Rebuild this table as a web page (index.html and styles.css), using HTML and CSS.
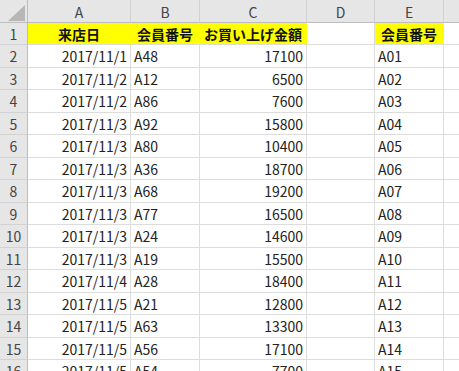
FILE: index.html
```html
<!DOCTYPE html>
<html lang="ja">
<head>
<meta charset="utf-8">
<title>Sheet</title>
<link rel="stylesheet" href="styles.css">
</head>
<body>
<div class="sheet">
  <div class="corner"><svg class="tri" width="28" height="23" viewBox="0 0 28 23"><polygon points="25,5 25,21 8,21" fill="#b7b7b7"/></svg></div>
  <div class="ch">A</div><div class="ch">B</div><div class="ch">C</div><div class="ch">D</div><div class="ch">E</div><div class="ch last"></div>

  <div class="rh">1</div>
  <div class="c hd y">来店日</div><div class="c hd y">会員番号</div><div class="c hd y">お買い上げ金額</div><div class="c"></div><div class="c hd y">会員番号</div><div class="c last"></div>

  <div class="rh">2</div><div class="c r">2017/11/1</div><div class="c">A48</div><div class="c r">17100</div><div class="c"></div><div class="c">A01</div><div class="c last"></div>
  <div class="rh">3</div><div class="c r">2017/11/2</div><div class="c">A12</div><div class="c r">6500</div><div class="c"></div><div class="c">A02</div><div class="c last"></div>
  <div class="rh">4</div><div class="c r">2017/11/2</div><div class="c">A86</div><div class="c r">7600</div><div class="c"></div><div class="c">A03</div><div class="c last"></div>
  <div class="rh">5</div><div class="c r">2017/11/3</div><div class="c">A92</div><div class="c r">15800</div><div class="c"></div><div class="c">A04</div><div class="c last"></div>
  <div class="rh">6</div><div class="c r">2017/11/3</div><div class="c">A80</div><div class="c r">10400</div><div class="c"></div><div class="c">A05</div><div class="c last"></div>
  <div class="rh">7</div><div class="c r">2017/11/3</div><div class="c">A36</div><div class="c r">18700</div><div class="c"></div><div class="c">A06</div><div class="c last"></div>
  <div class="rh">8</div><div class="c r">2017/11/3</div><div class="c">A68</div><div class="c r">19200</div><div class="c"></div><div class="c">A07</div><div class="c last"></div>
  <div class="rh">9</div><div class="c r">2017/11/3</div><div class="c">A77</div><div class="c r">16500</div><div class="c"></div><div class="c">A08</div><div class="c last"></div>
  <div class="rh">10</div><div class="c r">2017/11/3</div><div class="c">A24</div><div class="c r">14600</div><div class="c"></div><div class="c">A09</div><div class="c last"></div>
  <div class="rh">11</div><div class="c r">2017/11/3</div><div class="c">A19</div><div class="c r">15500</div><div class="c"></div><div class="c">A10</div><div class="c last"></div>
  <div class="rh">12</div><div class="c r">2017/11/4</div><div class="c">A28</div><div class="c r">18400</div><div class="c"></div><div class="c">A11</div><div class="c last"></div>
  <div class="rh">13</div><div class="c r">2017/11/5</div><div class="c">A21</div><div class="c r">12800</div><div class="c"></div><div class="c">A12</div><div class="c last"></div>
  <div class="rh">14</div><div class="c r">2017/11/5</div><div class="c">A63</div><div class="c r">13300</div><div class="c"></div><div class="c">A13</div><div class="c last"></div>
  <div class="rh">15</div><div class="c r">2017/11/5</div><div class="c">A56</div><div class="c r">17100</div><div class="c"></div><div class="c">A14</div><div class="c last"></div>
  <div class="rh">16</div><div class="c r">2017/11/5</div><div class="c">A54</div><div class="c r">7700</div><div class="c"></div><div class="c">A15</div><div class="c last"></div>
</div>
</body>
</html>
```
FILE: styles.css
```css
html, body {
  margin: 0;
  padding: 0;
  background: #ffffff;
  overflow: hidden;
}
.sheet {
  display: grid;
  grid-template-columns: 28px 103px 69px 107px 68px 69px 1fr;
  grid-template-rows: 23px repeat(7, 22px 23px) 22px 23px;
  width: 459px;
  height: 371px;
  overflow: hidden;
  font-family: "Noto Sans CJK JP", "Noto Sans", sans-serif;
  font-size: 14px;
  color: #222222;
}
.corner {
  background: #e6e6e6;
  border-right: 1px solid #bcbcbc;
  border-bottom: 1px solid #bcbcbc;
  box-sizing: border-box;
  position: relative;
}
.tri {
  display: block;
  position: absolute;
  left: 0;
  top: 0;
}
.ch {
  background: #e6e6e6;
  border-right: 1px solid #d2d2d2;
  border-bottom: 1px solid #bcbcbc;
  box-sizing: border-box;
  display: flex;
  align-items: center;
  justify-content: center;
  color: #444444;
  font-size: 14px;
  padding-top: 1px;
}
.rh {
  background: #e6e6e6;
  border-right: 1px solid #bcbcbc;
  border-bottom: 1px solid #d2d2d2;
  box-sizing: border-box;
  display: flex;
  align-items: center;
  justify-content: center;
  color: #444444;
  font-size: 14px;
}
.c {
  border-right: 1px solid #dddddd;
  border-bottom: 1px solid #dddddd;
  box-sizing: border-box;
  display: flex;
  align-items: center;
  padding: 0 3px;
  white-space: nowrap;
  overflow: hidden;
}
.c.r {
  justify-content: flex-end;
}
.c.hd {
  justify-content: center;
  font-weight: bold;
  color: #111111;
}
.c.y {
  background: #ffff00;
  border-right-color: #ffff00;
}
.last {
  border-right: none;
}
```
